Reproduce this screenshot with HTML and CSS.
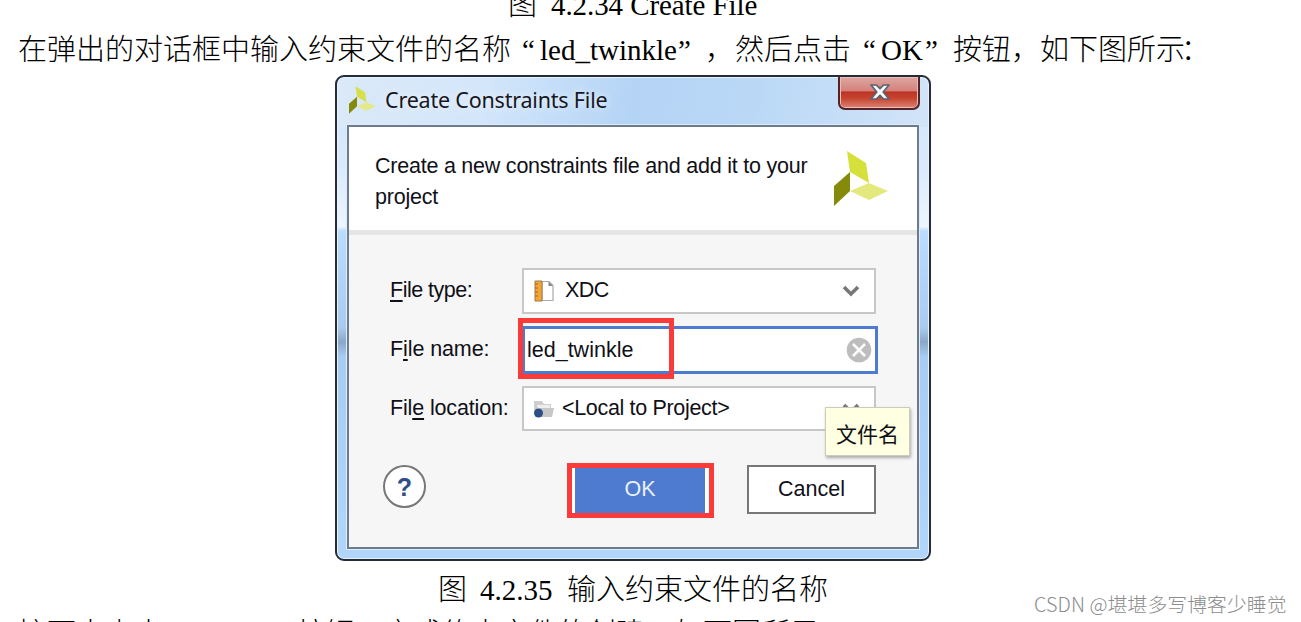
FILE: index.html
```
<!DOCTYPE html>
<html lang="zh-CN">
<head>
<meta charset="utf-8">
<title>Create Constraints File</title>
<link rel="stylesheet" href="styles.css">
</head>
<body>
<main class="page">
  <p class="line caption-top"><span class="w43">图</span><span class="tight">4.2.34 Create File</span></p>
  <p class="line sentence"><span class="w504">在弹出的对话框中输入约束文件的名称</span><span class="w18">“</span><span class="w138 led">led_twinkle</span><span class="w25">”</span><span class="w33">，</span><span class="w125">然后点击</span><span class="w18">“</span><span class="w45">OK</span><span class="w26">”</span><span class="w58">按钮</span><span class="w29">，</span><span class="w141">如下图所示</span><span>：</span></p>

  <section class="dialog">
    <header class="titlebar">
      <svg class="title-logo" viewBox="0 0 54 55"><path fill="#d7df4b" d="M13 0l19 12 3 20-19-11z"/><path fill="#858a0a" d="M0 35l16-14v19L0 55z"/><path fill="#e3e98a" d="M16 40l19-8 19 8-19 9z"/></svg>
      <h1 class="title">Create Constraints File</h1>
      <div class="close"><svg width="22" height="18" viewBox="0 0 22 18"><path d="M2 2h5.500L11 5.700 14.500 2H20l-5.800 7 5.800 7h-5.500L11 12.300 7.500 16H2l5.800-7z" fill="#f7f7f7" stroke="#596174" stroke-width="1.700" stroke-linejoin="round"/></svg></div>
    </header>
    <div class="content">
      <div class="intro">
        <p class="intro-text">Create a new constraints file and add it to your<br>project</p>
        <svg class="logo" width="54" height="55" viewBox="0 0 54 55"><path fill="#d6e03a" d="M13 0l19 12 3 20-19-11z"/><path fill="#858a0a" d="M0 35l16-14v19L0 55z"/><path fill="#e3e97d" d="M16 40l19-8 19 8-19 9z"/></svg>
      </div>
      <div class="fields">
        <label class="label type-label"><u>F</u>ile type:</label>
        <div class="box select-type">
          <svg class="doc" width="20" height="22" viewBox="0 0 20 22"><path d="M8 1.500h7l4 4v15H8z" fill="#fff" stroke="#aaa" stroke-width="1.200"/><path d="M14.500 1.500v4.500H19z" fill="#888"/><path d="M1 1h7v20H1z" fill="#f4a432" stroke="#9c7b4d"/><path d="M1 4h3M1 8h3M1 12h3M1 16h3" stroke="#a66d20"/></svg>
          <span class="grow xdc">XDC</span>
          <svg class="chevron" width="18" height="12" viewBox="0 0 18 12"><path d="M2 2l7 7 7-7" fill="none" stroke="#777" stroke-width="3.600"/></svg>
        </div>
        <label class="label name-label">F<u>i</u>le name:</label>
        <div class="box input-name">
          <span class="grow">led_twinkle</span>
          <svg width="26" height="26" viewBox="0 0 26 26"><circle cx="13" cy="13" r="12.300" fill="#bdbdbd"/><path d="M7 7l12 12M19 7L7 19" stroke="#fff" stroke-width="2.500"/></svg>
          <i class="mark mark-name"></i>
        </div>
        <label class="label location-label">Fil<u>e</u> location:</label>
        <div class="box select-location">
          <svg class="folder" width="22" height="20" viewBox="0 0 22 20"><path d="M1 11V2h8l2 3h7v4H5L1 15z" fill="#cecece"/><path d="M4 6h13v3H5z" fill="#eee"/><path d="M6 9h15l-2 9H4z" fill="#c7c7c7"/><circle cx="5.500" cy="14" r="4.500" fill="#2d4d86"/></svg>
          <span class="grow local">&lt;Local to Project&gt;</span>
          <svg class="chevron" width="18" height="12" viewBox="0 0 18 12"><path d="M2 2l7 7 7-7" fill="none" stroke="#777" stroke-width="3.600"/></svg>
          <div class="tooltip">文件名</div>
        </div>
      </div>
      <footer class="actions">
        <div class="help">?</div>
        <div class="ok-mark"><div class="ok">OK</div></div>
        <div class="cancel">Cancel</div>
      </footer>
    </div>
  </section>

  <p class="line caption"><span class="w42">图</span><span class="num">4.2.35</span><span>输入约束文件的名称</span></p>
  <p class="line next"><span class="w163">接下来点击</span><span class="w116">“Create”</span><span>按钮，完成约束文件的创建，如下图所示：</span></p>
  <div class="watermark">CSDN @堪堪多写博客少睡觉</div>
</main>
</body>
</html>
```
FILE: styles.css
```
* { box-sizing: border-box; }
body { margin: 0; background: #fff; }
p, h1 { margin: 0; }
.page {
  position: relative;
  width: 1301px;
  height: 622px;
  overflow: hidden;
  font-family: "Liberation Serif", "Noto Sans CJK SC", serif;
  font-size: 29px;
  color: #000;
}
.line { display: flex; height: 40px; line-height: 40px; white-space: pre; font-weight: 300; }
.line span { flex: none; }
.caption-top { margin-top: -15px; padding-left: 508px; }
.tight { letter-spacing: -0.08px; }
.sentence { margin-top: 5px; padding-left: 18px; }
.w504 { width: 504px; }
.w18 { width: 18px; }
.w138 { width: 138px; }
.w25 { width: 27px; }
.w33 { width: 30px; }
.w125 { width: 128px; }
.w45 { width: 44px; }
.w26 { width: 28px; }
.w58 { width: 58px; }
.w29 { width: 29px; }
.w141 { width: 141px; }
.w43 { width: 43px; }
.w42 { width: 42px; }
.w163 { width: 163px; }
.w116 { width: 116px; }

.dialog {
  width: 596px;
  height: 486px;
  margin: 5px 0 0 335px;
  padding: 0 10px 11px;
  border: 2px solid #252c38;
  border-radius: 9px;
  background:
    linear-gradient(100deg, #dbe9f8 0, #d3e6fa 25%, #b4d4f6 50%, #bad8f6 70%, #d2e4f8 100%) 0 0 / 100% 50px no-repeat,
    linear-gradient(#cfe4fb 0, #dcebfb 20%, #eef5fd 31%, #b9dcff 32%, #a9cbed 52%, #8ba7c8 55%, #a8ccf2 58%, #b2d5fa 100%);
  box-shadow: inset 0 0 0 1px #e5f2ff;
}
.titlebar { display: flex; height: 48px; }
.title-logo { width: 27px; height: 28px; margin: 9px 9px 0 2px; flex: none; }
.title {
  flex: 1;
  font: 400 21.5px/46px "Noto Sans", sans-serif;
  letter-spacing: -0.2px;
  color: #17171f;
  text-shadow: 0 0 8px #fff;
}
.close {
  display: flex;
  align-items: center;
  justify-content: center;
  width: 82px;
  height: 33px;
  margin-right: -1px;
  padding: 0 0 2px 2px;
  border: 2px solid #52242a;
  border-top: 0;
  border-radius: 0 0 7px 7px;
  background: linear-gradient(#dda7a3 0, #d5817a 45%, #bd3326 48%, #c5442e 68%, #dc8375 100%);
  box-shadow: inset 0 0 0 1px #eebcb4;
}
.content {
  width: 572px;
  height: 424px;
  border: 2px solid #6d7b8d;
  background: #f6f6f6;
  font: 21.5px/31px "Liberation Sans", sans-serif;
  color: #101018;
  box-shadow: 0 0 0 1px #dcecff;
}
.intro {
  display: flex;
  height: 108px;
  border-bottom: 5px solid #e5e5e5;
  background: #fff;
  padding: 24px 0 0 26px;
}
.intro-text { width: 459px; white-space: nowrap; letter-spacing: -0.23px; }
.fields {
  display: grid;
  grid-template-columns: 132px 356px;
  grid-template-rows: 46px 48px 45px;
  row-gap: 12px;
  padding: 33px 0 0 41px;
}
.label { line-height: 44px; white-space: nowrap; letter-spacing: -0.15px; }
.type-label { letter-spacing: -0.5px; }
.name-label { line-height: 47px; letter-spacing: -0.1px; }
u { text-decoration-thickness: 2px; text-underline-offset: 3px; }
.box { display: flex; align-items: center; position: relative; width: 354px; background: #fff; border: 2px solid #c7c7c7; }
.grow { flex: 1; line-height: 42px; }
.select-type { padding: 0 14px 0 10px; }
.doc { margin-right: 11px; }
.xdc { line-height: 38px; padding-bottom: 3px; letter-spacing: -0.5px; }
.local { line-height: 38px; padding-bottom: 2px; letter-spacing: -0.33px; }
.input-name { width: 356px; border: 3px solid #4c7bd0; padding: 0 3px 0 2px; }
.select-location { padding: 0 14px 0 9px; }
.folder { margin-right: 7px; }
.mark-name { position: absolute; left: -7px; top: -11px; width: 156px; height: 61px; border: 5px solid #fb3a3a; }
.tooltip {
  position: absolute;
  left: 301px;
  top: 19px;
  width: 85px;
  height: 49px;
  background: #ffffe1;
  border: 1px solid #ccccbc;
  box-shadow: 1px 2px 3px #aaa;
  font: 21px/51px "Noto Sans CJK SC", sans-serif;
  text-align: center;
}
.actions { display: flex; padding: 32px 0 0 34px; }
.help {
  width: 43px;
  height: 43px;
  margin-top: 2px;
  border: 2px solid #777;
  border-radius: 50%;
  background: #fff;
  color: #304f88;
  font-weight: 700;
  font-size: 25px;
  line-height: 41px;
  text-align: center;
}
.ok-mark { width: 147px; height: 55px; margin-left: 141px; border: 5px solid #fb3a3a; background: #fff; padding: 0 4px 0 3px; }
.ok { height: 45px; background: #4e7bcf; color: #e8f0ff; line-height: 42px; text-align: center; }
.cancel { width: 129px; height: 49px; margin: 2px 0 0 33px; border: 2px solid #777; background: #fff; line-height: 44px; text-align: center; }
.caption { margin-top: 9px; padding-left: 438px; }
.num { width: 87px; }
.next { margin-top: 4px; padding-left: 18px; }
.watermark {
  position: absolute;
  left: 1034px;
  top: 591px;
  font: 300 19.8px/26px "Noto Sans CJK SC", sans-serif;
  letter-spacing: 0.1px;
  color: #8c8c8c;
  white-space: nowrap;
}
```
